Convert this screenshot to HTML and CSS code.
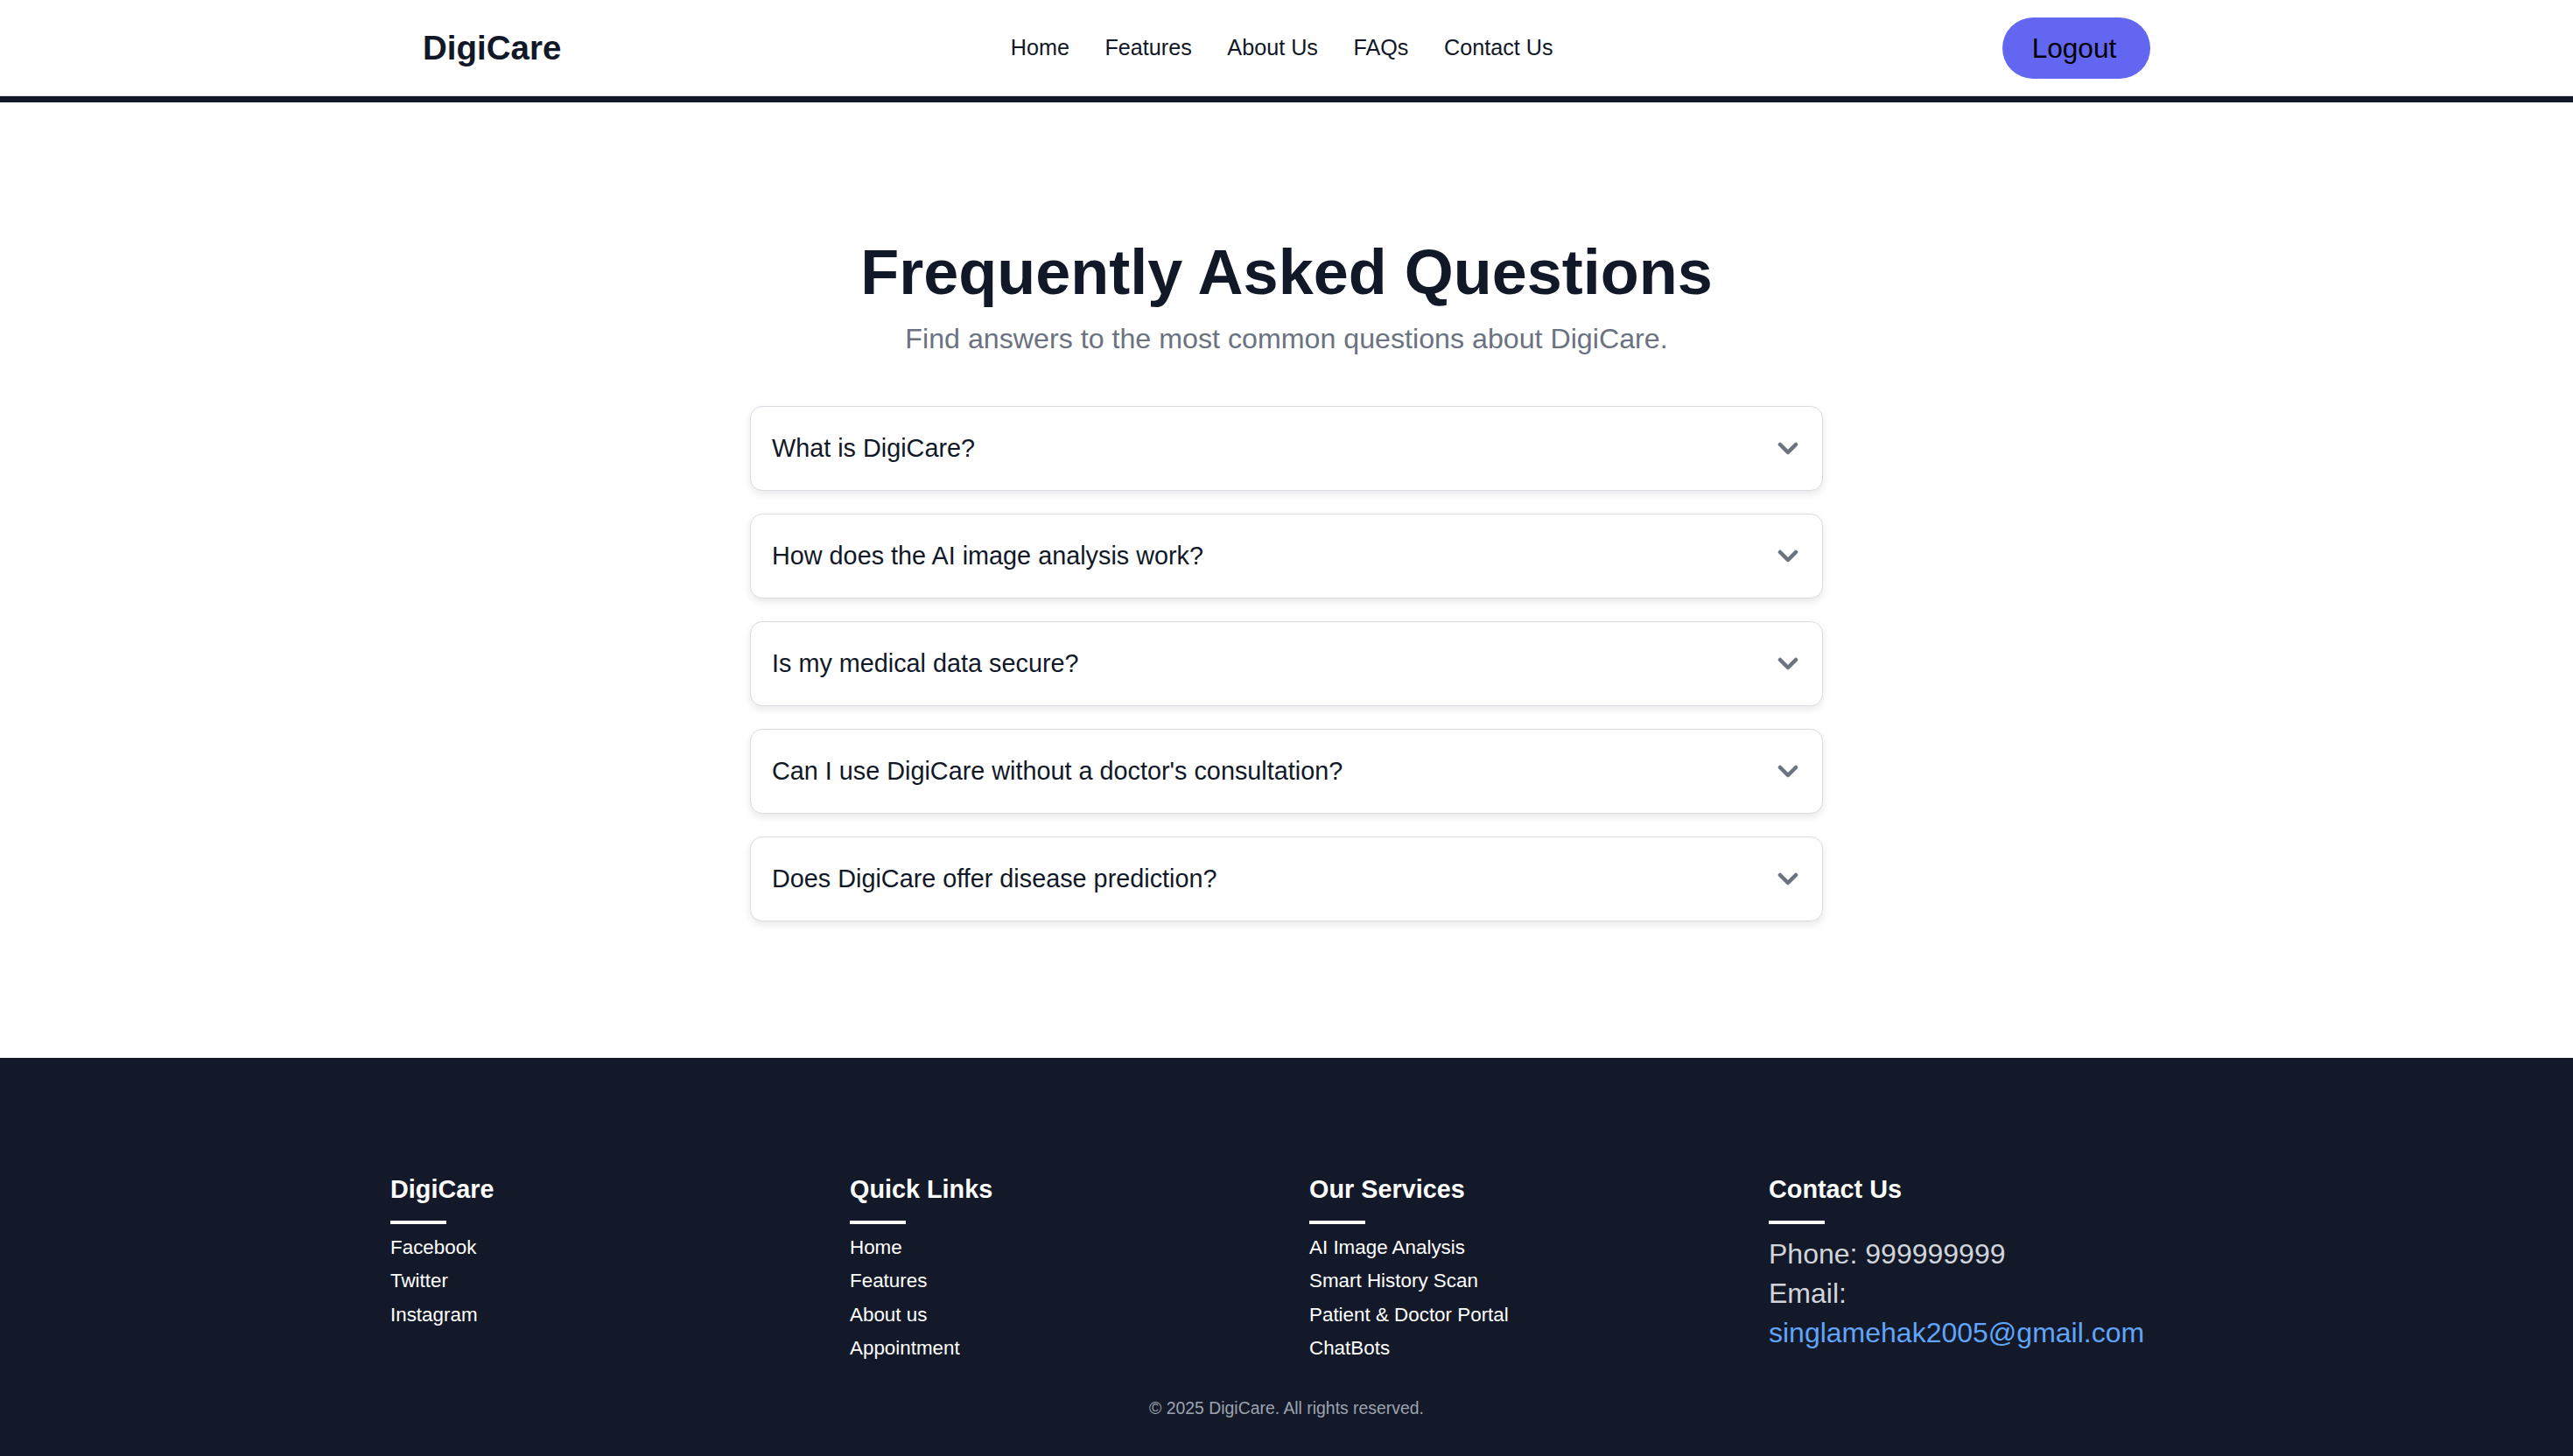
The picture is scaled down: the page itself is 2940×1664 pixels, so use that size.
FILE: index.html
```html
<!DOCTYPE html>
<html lang="en">
<head>
<meta charset="utf-8">
<title>DigiCare - FAQs</title>
<link rel="stylesheet" href="styles.css">
</head>
<body>
<header class="site-header">
  <div class="nav-inner">
    <div class="logo">DigiCare</div>
    <nav class="nav-links">
      <a href="#">Home</a>
      <a href="#">Features</a>
      <a href="#">About Us</a>
      <a href="#">FAQs</a>
      <a href="#">Contact Us</a>
    </nav>
    <button class="logout-btn">Logout</button>
  </div>
</header>
<div class="header-bar"></div>

<main class="faq-section">
  <h1 class="faq-title">Frequently Asked Questions</h1>
  <p class="faq-subtitle">Find answers to the most common questions about DigiCare.</p>
  <div class="faq-list">
    <div class="faq-item"><span>What is DigiCare?</span><svg class="chev" viewBox="0 0 24 16" width="24" height="16"><polyline points="3,3 12,12 21,3"/></svg></div>
    <div class="faq-item"><span>How does the AI image analysis work?</span><svg class="chev" viewBox="0 0 24 16" width="24" height="16"><polyline points="3,3 12,12 21,3"/></svg></div>
    <div class="faq-item"><span>Is my medical data secure?</span><svg class="chev" viewBox="0 0 24 16" width="24" height="16"><polyline points="3,3 12,12 21,3"/></svg></div>
    <div class="faq-item"><span>Can I use DigiCare without a doctor's consultation?</span><svg class="chev" viewBox="0 0 24 16" width="24" height="16"><polyline points="3,3 12,12 21,3"/></svg></div>
    <div class="faq-item"><span>Does DigiCare offer disease prediction?</span><svg class="chev" viewBox="0 0 24 16" width="24" height="16"><polyline points="3,3 12,12 21,3"/></svg></div>
  </div>
</main>

<footer class="site-footer">
  <div class="footer-grid">
    <div class="footer-col">
      <h3>DigiCare</h3>
      <div class="footer-line"></div>
      <ul class="footer-links">
        <li>Facebook</li>
        <li>Twitter</li>
        <li>Instagram</li>
      </ul>
    </div>
    <div class="footer-col">
      <h3>Quick Links</h3>
      <div class="footer-line"></div>
      <ul class="footer-links">
        <li>Home</li>
        <li>Features</li>
        <li>About us</li>
        <li>Appointment</li>
      </ul>
    </div>
    <div class="footer-col">
      <h3>Our Services</h3>
      <div class="footer-line"></div>
      <ul class="footer-links">
        <li>AI Image Analysis</li>
        <li>Smart History Scan</li>
        <li>Patient &amp; Doctor Portal</li>
        <li>ChatBots</li>
      </ul>
    </div>
    <div class="footer-col">
      <h3>Contact Us</h3>
      <div class="footer-line"></div>
      <p class="contact-text">Phone: 999999999<br>Email: <a href="#" class="email">singlamehak2005@gmail.com</a></p>
    </div>
  </div>
  <p class="copyright">© 2025 DigiCare. All rights reserved.</p>
</footer>
</body>
</html>
```

FILE: styles.css
```css
* { box-sizing: border-box; }

html, body {
  background: #131928;
}

body {
  margin: 0;
  font-family: "Liberation Sans", Arial, Helvetica, sans-serif;
  color: #111827;
}

.site-header {
  height: 110px;
  border-bottom: 1px solid #dfe2e7;
  background: #ffffff;
}

.nav-inner {
  width: 1974px;
  height: 109px;
  margin: 0 auto;
  display: flex;
  align-items: center;
  justify-content: space-between;
}

.logo {
  font-size: 38.5px;
  font-weight: 700;
  color: #111827;
}

.nav-links {
  display: flex;
  gap: 40.5px;
}

.nav-links a {
  font-size: 25.2px;
  color: #111827;
  text-decoration: none;
}

.logout-btn {
  font-family: "Liberation Sans", Arial, Helvetica, sans-serif;
  font-size: 31.6px;
  color: #000000;
  background: #6366f1;
  border: none;
  border-radius: 999px;
  width: 169px;
  height: 70px;
  padding: 0 5px 0 0;
  margin-top: 1px;
}

.header-bar {
  height: 7px;
  background: #111827;
}

.faq-section {
  padding: 153px 0 156px;
  text-align: center;
  background: #ffffff;
}

.faq-title {
  margin: 0;
  font-size: 72px;
  line-height: normal;
  font-weight: 700;
  color: #111827;
}

.faq-subtitle {
  margin: 17px 0 0;
  font-size: 32.2px;
  line-height: normal;
  color: #6b7280;
}

.faq-list {
  width: 1226px;
  margin: 58px auto 0;
  display: flex;
  flex-direction: column;
  gap: 26px;
  text-align: left;
}

.faq-item {
  height: 97px;
  border: 1px solid #d9dce3;
  border-radius: 14px;
  background: #ffffff;
  box-shadow: 0 4px 10px rgba(0, 0, 0, 0.09);
  display: flex;
  align-items: center;
  justify-content: space-between;
  padding: 0 27px 0 24px;
  font-size: 28.8px;
  color: #111827;
}

.chev {
  display: block;
  fill: none;
  stroke: #6b7280;
  stroke-width: 4.5;
  stroke-linecap: round;
  stroke-linejoin: round;
}

.site-footer {
  background: #131928;
  padding: 134px 0 44px;
  color: #ffffff;
}

.footer-grid {
  width: 2048px;
  margin: 0 auto;
  display: grid;
  grid-template-columns: repeat(4, 1fr);
  column-gap: 52px;
}

.footer-col h3 {
  margin: 0;
  font-size: 28.8px;
  line-height: normal;
  font-weight: 700;
  color: #ffffff;
}

.footer-line {
  width: 64px;
  height: 3.6px;
  background: #ffffff;
  margin-top: 19px;
}

.footer-links {
  list-style: none;
  margin: 8.4px 0 0;
  padding: 0;
}

.footer-links li {
  font-size: 22.4px;
  line-height: 38.5px;
  color: #ffffff;
}

.contact-text {
  margin: 12.8px 0 0;
  font-size: 32px;
  line-height: 45px;
  color: #d1d5db;
}

.email {
  color: #60a5fa;
  text-decoration: none;
}

.copyright {
  margin: 37px 0 0;
  text-align: center;
  font-size: 19.4px;
  line-height: normal;
  color: #9ca3af;
}
```
